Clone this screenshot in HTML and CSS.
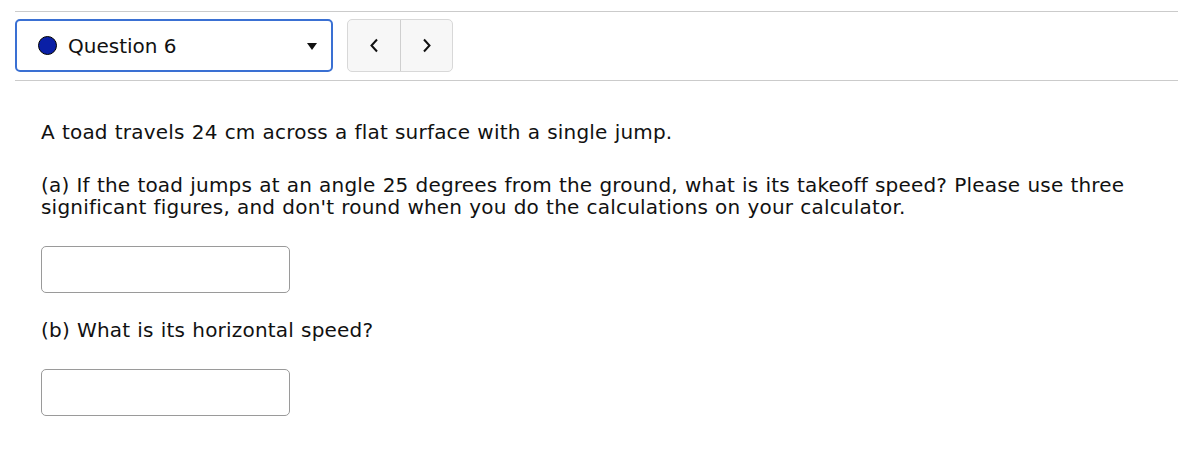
FILE: index.html
```html
<!DOCTYPE html>
<html>
<head>
<meta charset="utf-8">
<link rel="stylesheet" href="styles.css">
</head>
<body>
<div class="page">
  <div class="nav-bar">
    <div class="q-select">
      <span class="dot"></span>
      <span class="q-label">Question 6</span>
      <span class="caret"></span>
    </div>
    <div class="pager">
      <button class="pager-btn" aria-label="Previous">
        <svg width="10" height="15" viewBox="0 0 10 15"><path d="M8 1.5 L2.5 7.5 L8 13.5" fill="none" stroke="#111" stroke-width="2"/></svg>
      </button>
      <button class="pager-btn" aria-label="Next">
        <svg width="10" height="15" viewBox="0 0 10 15"><path d="M2 1.5 L7.5 7.5 L2 13.5" fill="none" stroke="#111" stroke-width="2"/></svg>
      </button>
    </div>
  </div>
  <div class="question">
    <p class="p-intro">A toad travels 24 cm across a flat surface with a single jump.</p>
    <p class="p-a">(a) If the toad jumps at an angle 25 degrees from the ground, what is its takeoff speed? Please use three<br>significant figures, and don't round when you do the calculations on your calculator.</p>
    <input class="answer answer-a" type="text">
    <p class="p-b">(b) What is its horizontal speed?</p>
    <input class="answer answer-b" type="text">
  </div>
</div>
</body>
</html>
```
FILE: styles.css
```css
html, body {
  margin: 0;
  padding: 0;
  background: #fff;
}
body {
  font-family: "DejaVu Sans", sans-serif;
  color: #111;
}
.page {
  padding: 11px 0 0 15px;
}
.nav-bar {
  display: flex;
  align-items: center;
  gap: 14px;
  border-top: 1px solid #cbcbcb;
  border-bottom: 1px solid #cbcbcb;
  padding: 7px 0 8px 0;
}
.q-select {
  box-sizing: border-box;
  width: 318px;
  height: 53px;
  border: 2px solid #3a70d3;
  border-radius: 5px;
  display: flex;
  align-items: center;
  padding: 0 14px 0 21px;
}
.dot {
  width: 17px;
  height: 17px;
  border-radius: 50%;
  background: #0a1fa6;
  border: 1px solid #000;
  flex: none;
}
.q-label {
  margin-left: 11px;
  font-size: 20px;
  flex: 1;
}
.caret {
  width: 0;
  height: 0;
  border-left: 5.5px solid transparent;
  border-right: 5.5px solid transparent;
  border-top: 7px solid #111;
  margin-top: 2px;
}
.pager {
  display: flex;
  height: 53px;
  box-sizing: border-box;
  border: 1px solid #d8d8d8;
  border-radius: 5px;
  background: #f7f7f7;
  overflow: hidden;
}
.pager-btn {
  width: 52px;
  border: 0;
  background: transparent;
  padding: 0;
  display: flex;
  align-items: center;
  justify-content: center;
}
.pager-btn + .pager-btn {
  border-left: 1px solid #cfcfcf;
}
.question {
  padding: 40px 0 0 26px;
  font-size: 20px;
  line-height: 22px;
  letter-spacing: 0.2px;
  word-spacing: 0.5px;
}
.question p {
  margin: 0;
}
.p-a {
  margin-top: 31px !important;
}
.answer {
  display: block;
  box-sizing: border-box;
  width: 249px;
  height: 47px;
  border: 1px solid #9a9a9a;
  border-radius: 5px;
  padding: 0 8px;
}
.answer-a {
  margin-top: 28px;
}
.p-b {
  margin-top: 26px !important;
}
.answer-b {
  margin-top: 28px;
}
```
